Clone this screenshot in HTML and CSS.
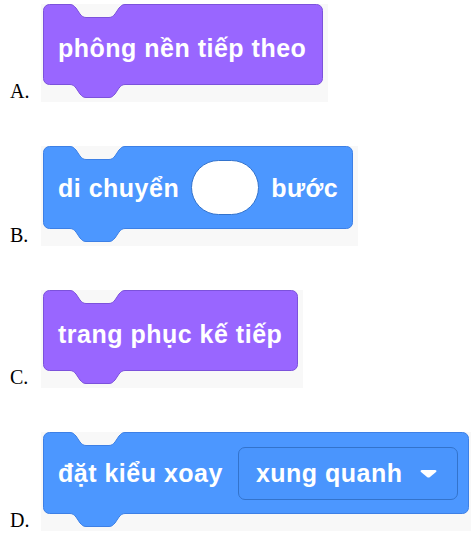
FILE: index.html
```html
<!DOCTYPE html>
<html lang="vi">
<head>
<meta charset="utf-8">
<title>Khối lệnh</title>
<link rel="stylesheet" href="styles.css">
</head>
<body>
<div class="page">
  <div class="row">
    <span class="label">A.</span>
    <div class="shot">
      <div class="block purple block-a">
        <svg class="shape" width="280" height="95" viewBox="0 0 280 95"><path d="M0.5,6.5 A6,6 0 0 1 6.5,0.5 H27 C30,0.5 31,2 33,4 L37,10 C39,12 40,13.5 43,13.5 H66 C69,13.5 70,12 72,10 L76,4 C78,2 79,0.5 82,0.5 H273.5 A6,6 0 0 1 279.5,6.5 V74.5 A6,6 0 0 1 273.5,80.5 H82 C79,80.5 78,82 76,84 L72,90 C70,92 69,93.5 66,93.5 H43 C40,93.5 39,92 37,90 L33,84 C31,82 30,80.5 27,80.5 H6.5 A6,6 0 0 1 0.5,74.5 Z"/></svg>
        <span class="text text-low">phông nền tiếp theo</span>
      </div>
    </div>
  </div>

  <div class="row">
    <span class="label">B.</span>
    <div class="shot">
      <div class="block blue block-b">
        <svg class="shape" width="310" height="97" viewBox="0 0 310 97"><path d="M0.5,6.5 A6,6 0 0 1 6.5,0.5 H27 C30,0.5 31,2 33,4 L37,10 C39,12 40,13.5 43,13.5 H66 C69,13.5 70,12 72,10 L76,4 C78,2 79,0.5 82,0.5 H303.5 A6,6 0 0 1 309.5,6.5 V76.5 A6,6 0 0 1 303.5,82.5 H82 C79,82.5 78,84 76,86 L72,92 C70,94 69,95.5 66,95.5 H43 C40,95.5 39,94 37,92 L33,86 C31,84 30,82.5 27,82.5 H6.5 A6,6 0 0 1 0.5,76.5 Z"/></svg>
        <span class="text">di chuyển</span>
        <span class="oval"></span>
        <span class="text">bước</span>
      </div>
    </div>
  </div>

  <div class="row">
    <span class="label">C.</span>
    <div class="shot">
      <div class="block purple block-c">
        <svg class="shape" width="255" height="95" viewBox="0 0 255 95"><path d="M0.5,6.5 A6,6 0 0 1 6.5,0.5 H27 C30,0.5 31,2 33,4 L37,10 C39,12 40,13.5 43,13.5 H66 C69,13.5 70,12 72,10 L76,4 C78,2 79,0.5 82,0.5 H248.5 A6,6 0 0 1 254.5,6.5 V74.5 A6,6 0 0 1 248.5,80.5 H82 C79,80.5 78,82 76,84 L72,90 C70,92 69,93.5 66,93.5 H43 C40,93.5 39,92 37,90 L33,84 C31,82 30,80.5 27,80.5 H6.5 A6,6 0 0 1 0.5,74.5 Z"/></svg>
        <span class="text text-low">trang phục kế tiếp</span>
      </div>
    </div>
  </div>

  <div class="row">
    <span class="label">D.</span>
    <div class="shot shot-wide">
      <div class="block blue block-d">
        <svg class="shape" width="426" height="96" viewBox="0 0 426 96"><path d="M0.5,6.5 A6,6 0 0 1 6.5,0.5 H27 C30,0.5 31,2 33,4 L37,10 C39,12 40,13.5 43,13.5 H66 C69,13.5 70,12 72,10 L76,4 C78,2 79,0.5 82,0.5 H419.5 A6,6 0 0 1 425.5,6.5 V75.5 A6,6 0 0 1 419.5,81.5 H82 C79,81.5 78,83 76,85 L72,91 C70,93 69,94.5 66,94.5 H43 C40,94.5 39,93 37,91 L33,85 C31,83 30,81.5 27,81.5 H6.5 A6,6 0 0 1 0.5,75.5 Z"/></svg>
        <span class="text">đặt kiểu xoay</span>
        <span class="dropdown">
          <span class="text">xung quanh</span>
          <svg class="caret" width="17" height="9" viewBox="0 0 17 9"><path d="M2,1 H15 C16.5,1 17,2 16,3 L10,8 C9,8.8 8,8.8 7,8 L1,3 C0,2 0.5,1 2,1 Z"/></svg>
        </span>
      </div>
    </div>
  </div>
</div>
</body>
</html>
```

FILE: styles.css
```css
html, body {
  margin: 0;
  padding: 0;
  background: #ffffff;
}

.page {
  display: flex;
  flex-direction: column;
  gap: 44px;
  padding-top: 4px;
}

.row {
  display: flex;
  align-items: flex-end;
}

.label {
  flex-shrink: 0;
  box-sizing: border-box;
  width: 41px;
  padding-left: 10px;
  font-family: "Liberation Serif", "Times New Roman", serif;
  font-size: 20px;
  line-height: 20px;
  color: #000;
  margin-bottom: 1px;
}

.shot {
  flex-shrink: 0;
  background: #f8f8f8;
  padding: 0 5px 3px 2px;
}

.shot-wide {
  padding-right: 2px;
}

.block {
  position: relative;
  box-sizing: border-box;
  display: flex;
  align-items: center;
  padding-left: 15px;
  margin-bottom: 14px;
}

.block > .text,
.block > .oval,
.block > .dropdown {
  position: relative;
}

.shape {
  position: absolute;
  left: 0;
  top: 0;
  overflow: visible;
}

.purple .shape path {
  fill: #9966ff;
  stroke: #7c52db;
  stroke-width: 1;
}

.blue .shape path {
  fill: #4c97ff;
  stroke: #3d80e6;
  stroke-width: 1;
}

.block-a { width: 280px; height: 81px; }
.block-b { width: 310px; height: 83px; gap: 12px; }
.block-c { width: 255px; height: 81px; }
.block-d { width: 426px; height: 82px; gap: 15px; }

.text {
  font-family: "Liberation Sans", Arial, sans-serif;
  font-weight: 700;
  font-size: 25px;
  letter-spacing: 0.5px;
  color: #ffffff;
  white-space: nowrap;
  line-height: 28px;
}

.text-low {
  padding-top: 7px;
}

.oval {
  box-sizing: border-box;
  width: 68px;
  height: 55px;
  border-radius: 28px;
  background: #ffffff;
  border: 1px solid #3373cc;
}

.dropdown {
  box-sizing: border-box;
  width: 220px;
  height: 53px;
  display: flex;
  align-items: center;
  justify-content: space-between;
  padding: 0 20px 0 17px;
  border: 1px solid #3373cc;
  border-radius: 7px;
  background: #4a95fd;
}

.caret path {
  fill: #ffffff;
}
```
